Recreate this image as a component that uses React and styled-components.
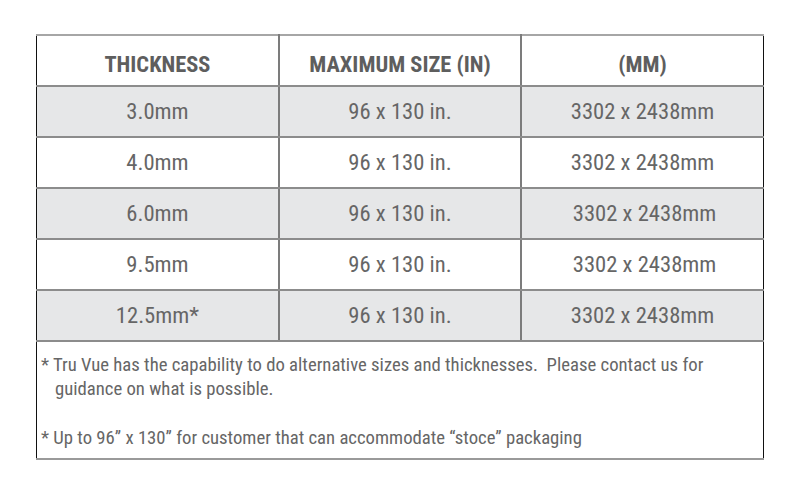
import React from "react";
import styled, { createGlobalStyle } from "styled-components";

const Global = createGlobalStyle`
  html, body { margin: 0; padding: 0; background: #fff; }
  body { font-family: "Roboto Condensed", "Liberation Sans Narrow", "Roboto", sans-serif; }
`;

const Page = styled.div`
  width: 800px;
  height: 500px;
  padding: 34px 0 0 36px;
  box-sizing: border-box;
`;

const Table = styled.table`
  width: 728px;
  border-collapse: collapse;
  table-layout: fixed;
  border-top: 2px solid #a6a6a6;
  border-left: 1px solid #111;
  border-right: 1px solid #111;
  border-bottom: 2px solid #9a9a9a;
`;

const Row = styled.tr`
  background: ${(p) => (p.$shade ? "#e6e7e8" : "#fff")};
`;

const Head = styled.th`
  height: 43px;
  padding: 6px 0 0 0;
  font-size: 22.4px;
  font-weight: 700;
  color: #5e5e5e;
  text-align: center;
  border-bottom: 2px solid #8c8c8c;
  & + & { border-left: 2px solid #7c7c7c; }
`;

const Cell = styled.td`
  height: 49px;
  padding: 0;
  font-size: 22.6px;
  font-weight: 400;
  color: #666;
  text-align: center;
  border-bottom: 2px solid #8c8c8c;
  padding-left: ${(p) => p.$nudge || 0}px;
  & + & { border-left: 2px solid #7c7c7c; }
`;

const Notes = styled.td`
  padding: 11px 4px 8px 4px;
  font-size: 18.7px;
  color: #666;
  line-height: 24px;
`;

const Note = styled.p`
  margin: 0;
  padding-left: 14px;
  text-indent: -14px;
  & + & { margin-top: 25px; }
`;

const rows = [
  ["3.0mm", "96 x 130 in.", "3302 x 2438mm", 0],
  ["4.0mm", "96 x 130 in.", "3302 x 2438mm", 0],
  ["6.0mm", "96 x 130 in.", "3302 x 2438mm", 4],
  ["9.5mm", "96 x 130 in.", "3302 x 2438mm", 4],
  ["12.5mm*", "96 x 130 in.", "3302 x 2438mm", 0],
];

export default function App() {
  return (
    <Page>
      <Global />
      <Table>
        <thead>
          <Row>
            <Head>THICKNESS</Head>
            <Head>MAXIMUM SIZE (IN)</Head>
            <Head>(MM)</Head>
          </Row>
        </thead>
        <tbody>
          {rows.map((r, i) => (
            <Row key={i} $shade={i % 2 === 0}>
              <Cell>{r[0]}</Cell>
              <Cell>{r[1]}</Cell>
              <Cell $nudge={r[3]}>{r[2]}</Cell>
            </Row>
          ))}
          <tr>
            <Notes colSpan={3}>
              <Note>* Tru Vue has the capability to do alternative sizes and thicknesses.&nbsp; Please contact us for guidance on what is possible.</Note>
              <Note>* Up to 96” x 130” for customer that can accommodate “stoce” packaging</Note>
            </Notes>
          </tr>
        </tbody>
      </Table>
    </Page>
  );
}
